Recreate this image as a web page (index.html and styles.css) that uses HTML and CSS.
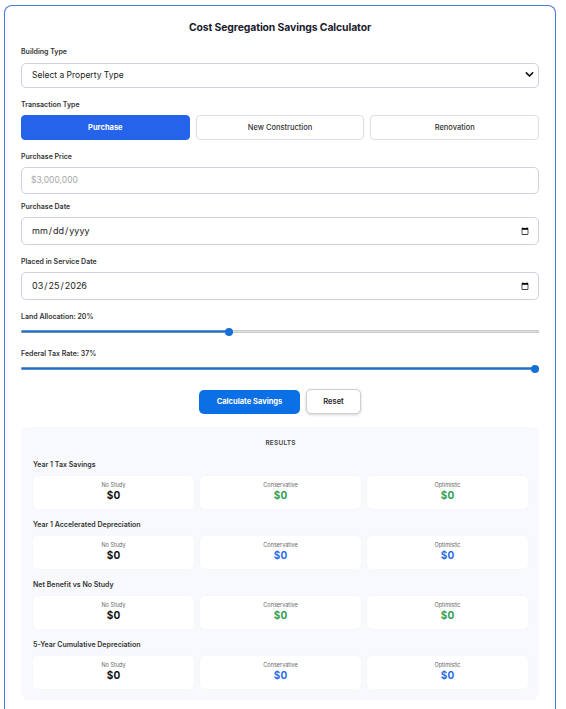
FILE: index.html
```html
<!DOCTYPE html>
<html lang="en">
<head>
<meta charset="utf-8">
<title>Cost Segregation Savings Calculator</title>
<link rel="stylesheet" href="styles.css">
</head>
<body>
<div class="calc">
  <h1 class="title">Cost Segregation Savings Calculator</h1>

  <div class="field">
    <label class="label">Building Type</label>
    <div class="select-wrap">
      <select class="control select">
        <option>Select a Property Type</option>
      </select>
      <svg class="chevron" viewBox="0 0 10 10" width="9" height="9"><path d="M1.5 3.2 L5 6.7 L8.5 3.2" fill="none" stroke="#111" stroke-width="1.8" stroke-linecap="round" stroke-linejoin="round"/></svg>
    </div>
  </div>

  <div class="field">
    <label class="label">Transaction Type</label>
    <div class="tabs">
      <button class="tab active">Purchase</button>
      <button class="tab">New Construction</button>
      <button class="tab">Renovation</button>
    </div>
  </div>

  <div class="field field-tight">
    <label class="label">Purchase Price</label>
    <input class="control input" type="text" placeholder="$3,000,000">
  </div>

  <div class="field">
    <label class="label">Purchase Date</label>
    <input class="control input date" type="date">
  </div>

  <div class="field">
    <label class="label">Placed in Service Date</label>
    <input class="control input date" type="date" value="2026-03-25">
  </div>

  <div class="field">
    <label class="label">Land Allocation: 20%</label>
    <input class="range" type="range" min="0" max="50" value="20" style="--fill:40%">
  </div>

  <div class="field">
    <label class="label">Federal Tax Rate: 37%</label>
    <input class="range" type="range" min="0" max="37" value="37" style="--fill:100%">
  </div>

  <div class="actions">
    <button class="btn primary">Calculate Savings</button>
    <button class="btn secondary">Reset</button>
  </div>

  <section class="results">
    <div class="results-title">RESULTS</div>

    <div class="metric">
      <div class="metric-title">Year 1 Tax Savings</div>
      <div class="metric-grid">
        <div class="cell"><div class="cell-label">No Study</div><div class="cell-value">$0</div></div>
        <div class="cell"><div class="cell-label">Conservative</div><div class="cell-value green">$0</div></div>
        <div class="cell"><div class="cell-label">Optimistic</div><div class="cell-value green">$0</div></div>
      </div>
    </div>

    <div class="metric">
      <div class="metric-title">Year 1 Accelerated Depreciation</div>
      <div class="metric-grid">
        <div class="cell"><div class="cell-label">No Study</div><div class="cell-value">$0</div></div>
        <div class="cell"><div class="cell-label">Conservative</div><div class="cell-value blue">$0</div></div>
        <div class="cell"><div class="cell-label">Optimistic</div><div class="cell-value blue">$0</div></div>
      </div>
    </div>

    <div class="metric">
      <div class="metric-title">Net Benefit vs No Study</div>
      <div class="metric-grid">
        <div class="cell"><div class="cell-label">No Study</div><div class="cell-value">$0</div></div>
        <div class="cell"><div class="cell-label">Conservative</div><div class="cell-value green">$0</div></div>
        <div class="cell"><div class="cell-label">Optimistic</div><div class="cell-value green">$0</div></div>
      </div>
    </div>

    <div class="metric">
      <div class="metric-title">5-Year Cumulative Depreciation</div>
      <div class="metric-grid">
        <div class="cell"><div class="cell-label">No Study</div><div class="cell-value">$0</div></div>
        <div class="cell"><div class="cell-label">Conservative</div><div class="cell-value blue">$0</div></div>
        <div class="cell"><div class="cell-label">Optimistic</div><div class="cell-value blue">$0</div></div>
      </div>
    </div>
  </section>
</div>
</body>
</html>
```
FILE: styles.css
```css
* { box-sizing: border-box; }

html, body {
  margin: 0;
  padding: 0;
  background: #ffffff;
}

body {
  font-family: Inter, "Liberation Sans", sans-serif;
  color: #222;
  padding: 5px 10px 0 4px;
}

.calc {
  border: 1px solid #4a7bd8;
  border-bottom: none;
  border-radius: 8px 8px 0 0;
  padding: 15px 16px 20px 16px;
  min-height: 720px;
}

.title {
  margin: 0 0 12px 0;
  font-size: 10.4px;
  line-height: 14px;
  font-weight: 700;
  text-align: center;
  color: #1b1d2e;
  letter-spacing: -0.1px;
}

.field {
  display: flex;
  flex-direction: column;
  margin-bottom: 12px;
}

.field-tight {
  margin-bottom: 8px;
}

.label {
  display: block;
  font-size: 7px;
  line-height: 10px;
  font-weight: 600;
  color: #333;
  margin-bottom: 5px;
}

.control {
  width: 100%;
  font-family: Inter, "Liberation Sans", sans-serif;
  font-size: 8.5px;
  color: #222;
  background: #fff;
  border: 1px solid #cfd1e3;
  border-radius: 5px;
  outline: none;
  margin: 0;
}

.select-wrap {
  position: relative;
}

.select {
  -webkit-appearance: none;
  appearance: none;
  height: 25px;
  padding: 0 10px;
}

.chevron {
  position: absolute;
  right: 5px;
  top: 8px;
  pointer-events: none;
}

.input {
  height: 27px;
  padding: 0 9px;
}

.input::placeholder {
  color: #a8a8a8;
}

.date {
  height: 28px;
  font-size: 9px;
  padding: 0 9px;
}

.date::-webkit-calendar-picker-indicator {
  width: 8px;
  height: 8px;
  padding: 0;
  margin: 0 0 0 4px;
}

.tabs {
  display: grid;
  grid-template-columns: 1fr 1fr 1fr;
  gap: 6px;
}

.tab {
  height: 25px;
  font-family: Inter, "Liberation Sans", sans-serif;
  font-size: 7.5px;
  font-weight: 500;
  color: #333;
  background: #fff;
  border: 1px solid #dcdde6;
  border-radius: 4px;
  padding: 0;
}

.tab.active {
  background: #2563eb;
  border-color: #2563eb;
  color: #fff;
  font-weight: 700;
}

.range {
  -webkit-appearance: none;
  appearance: none;
  width: 100%;
  height: 10px;
  margin: 0;
  background: transparent;
}

.range::-webkit-slider-runnable-track {
  height: 3px;
  border-radius: 2px;
  background: linear-gradient(to right, #1770d6 0, #1770d6 var(--fill), #e2e2e2 var(--fill), #e2e2e2 100%);
  box-shadow: inset 0 0 0 0.5px #b0b0b0;
}

.range::-webkit-slider-thumb {
  -webkit-appearance: none;
  appearance: none;
  width: 8px;
  height: 8px;
  border-radius: 50%;
  background: #1770d6;
  margin-top: -2.5px;
  border: none;
}

.actions {
  display: flex;
  justify-content: center;
  gap: 6px;
  margin-top: 16px;
  margin-bottom: 13px;
}

.btn {
  height: 24px;
  font-family: Inter, "Liberation Sans", sans-serif;
  font-size: 7.5px;
  font-weight: 700;
  border-radius: 5px;
  padding: 0;
}

.btn.primary {
  width: 101px;
  background: #0b6fe6;
  color: #fff;
  border: none;
}

.btn.secondary {
  width: 55px;
  height: 25px;
  margin-top: -1px;
  background: #fff;
  color: #222;
  font-weight: 600;
  border: 1px solid #cfcfcf;
  box-shadow: 0 1px 3px rgba(0, 0, 0, 0.18);
}

.results {
  background: #f7f9fc;
  border-radius: 8px;
  padding: 11px 11px 11px 12px;
}

.results-title {
  text-align: center;
  font-size: 6.5px;
  line-height: 10px;
  font-weight: 600;
  color: #444;
  letter-spacing: 0.2px;
  margin-bottom: 12px;
}

.metric {
  margin-bottom: 11px;
}

.metric:last-child {
  margin-bottom: 0;
}

.metric-title {
  font-size: 7px;
  line-height: 10px;
  font-weight: 600;
  color: #333;
  margin-bottom: 6px;
}

.metric-grid {
  display: grid;
  grid-template-columns: 1fr 1fr 1fr;
  gap: 6px;
}

.cell {
  background: #fff;
  border-radius: 5px;
  box-shadow: 0 0 2px rgba(0, 0, 0, 0.03);
  text-align: center;
  padding: 5px 0 8px 0;
}

.cell-label {
  font-size: 5.5px;
  line-height: 8px;
  color: #666;
}

.cell-value {
  font-size: 10px;
  line-height: 12px;
  font-weight: 700;
  color: #111;
}

.cell-value.green {
  color: #2f9d4f;
}

.cell-value.blue {
  color: #2a6ce6;
}
```
